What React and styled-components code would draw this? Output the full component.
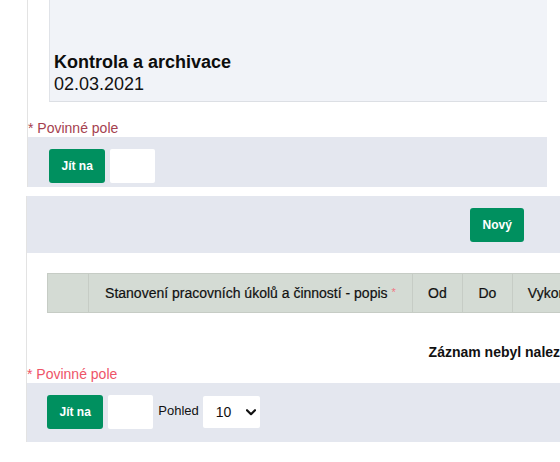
import React from "react";
import styled, { createGlobalStyle } from "styled-components";

const GlobalStyle = createGlobalStyle`
  *, *::before, *::after { box-sizing: border-box; }
  html, body { margin: 0; padding: 0; overflow: hidden; background: #fff; }
  body {
    width: 560px;
    height: 462px;
    font-family: "Liberation Sans", Arial, Helvetica, sans-serif;
    color: #111;
  }
`;

const Page = styled.div`
  display: flex;
  flex-direction: column;
  align-items: flex-start;
`;

const Panel = styled.section`
  margin-left: ${(p) => p.$left}px;
  margin-top: ${(p) => p.$top || 0}px;
  width: ${(p) => p.$width}px;
  flex-shrink: 0;
  border-left: 1px solid #e3e3e3;
  background: #fff;
`;

const InfoCard = styled.div`
  margin-left: 21px;
  padding: 51px 4px 6px;
  background: #f1f3f8;
  border-left: 1px solid #e0e3e8;
  border-bottom: 1px solid #dcdfe4;
`;

const CardTitle = styled.div`
  font-size: 18px;
  line-height: 22px;
  font-weight: 700;
  color: #0d0d0d;
`;

const CardDate = styled.div`
  font-size: 18px;
  line-height: 22px;
  color: #111;
`;

const Required = styled.div`
  margin-top: ${(p) => p.$top || 0}px;
  font-size: 14px;
  line-height: 17px;
  color: ${(p) => p.$color};
`;

const Band = styled.div`
  display: flex;
  align-items: center;
  gap: 5px;
  background: #e4e7ef;
  padding: ${(p) => p.$pad};
`;

const GreenButton = styled.button`
  height: 34px;
  padding: 0 12.5px;
  border: none;
  border-radius: 3px;
  background: #00905f;
  color: #fff;
  font-family: "Liberation Sans", Arial, sans-serif;
  font-size: 12px;
  font-weight: 700;
  cursor: pointer;
  flex-shrink: 0;
`;

const PageInput = styled.input`
  width: 45px;
  height: 34px;
  border: none;
  border-radius: 2px;
  background: #fff;
  padding: 0 4px;
  font-family: "Liberation Sans", Arial, sans-serif;
  font-size: 14px;
  flex-shrink: 0;
`;

const ViewLabel = styled.span`
  font-size: 13px;
  color: #111;
  margin-bottom: 4px;
`;

const SelectWrap = styled.div`
  position: relative;
  width: 57px;
  height: 32px;
  margin-left: -1px;
  flex-shrink: 0;
`;

const ViewSelect = styled.select`
  appearance: none;
  -webkit-appearance: none;
  width: 100%;
  height: 100%;
  border: none;
  border-radius: 2px;
  background: #fff;
  padding: 0 0 0 13px;
  font-family: "Liberation Sans", Arial, sans-serif;
  font-size: 14px;
  color: #111;
`;

const Chevron = styled.svg`
  position: absolute;
  right: 4px;
  top: 13px;
  pointer-events: none;
`;

const Toolbar = styled.div`
  display: flex;
  align-items: center;
  height: 57px;
  padding: 0 0 0 443px;
  background: #e4e7ef;
`;

const TableWrap = styled.div`
  padding: 20px 20px 0;
`;

const Grid = styled.table`
  width: 911px;
  border-collapse: collapse;
`;

const HeadCell = styled.th`
  width: ${(p) => p.$w}px;
  height: 39px;
  padding: 0 15px;
  background: #d4dbd4;
  border: 1px solid #c6ccc5;
  font-size: 14px;
  font-weight: 400;
  color: #111;
  -webkit-text-stroke: 0.2px #111;
  text-align: center;
  white-space: nowrap;
`;

const Star = styled.span`
  color: #f07984;
  -webkit-text-stroke: 0;
  font-size: 11px;
  vertical-align: 2px;
`;

const EmptyCell = styled.td`
  padding: 31px 0 6px;
  font-size: 14px;
  line-height: 16px;
  font-weight: 700;
  text-align: center;
  color: #111;
`;

const columns = [
  { key: "sel", width: 41, label: "" },
  { key: "popis", width: 324, label: "Stanovení pracovních úkolů a činností - popis", required: true },
  { key: "od", width: 50, label: "Od" },
  { key: "do", width: 50, label: "Do" },
  { key: "vyk", width: 106, label: "Vykonavatel" },
  { key: "pozn", width: 200, label: "Poznámka" },
  { key: "akce", width: 140, label: "Akce" },
];

export default function App() {
  return (
    <>
      <GlobalStyle />
      <Page>
        <Panel $left={27} $width={520}>
          <InfoCard>
            <CardTitle>Kontrola a archivace</CardTitle>
            <CardDate>02.03.2021</CardDate>
          </InfoCard>
          <Required $top={18} $color="#a5414f">* Povinné pole</Required>
          <Band $pad="12px 0 4px 21px">
            <GreenButton>Jít na</GreenButton>
            <PageInput type="text" />
          </Band>
        </Panel>

        <Panel $left={26} $top={9} $width={952}>
          <Toolbar>
            <GreenButton>Nový</GreenButton>
          </Toolbar>
          <TableWrap>
            <Grid>
              <thead>
                <tr>
                  {columns.map((c) => (
                    <HeadCell key={c.key} $w={c.width}>
                      {c.label}
                      {c.required && (
                        <>
                          {" "}
                          <Star>*</Star>
                        </>
                      )}
                    </HeadCell>
                  ))}
                </tr>
              </thead>
              <tbody>
                <tr>
                  <EmptyCell colSpan={columns.length}>Záznam nebyl nalezen</EmptyCell>
                </tr>
              </tbody>
            </Grid>
          </TableWrap>
          <Required $color="#ee5468">* Povinné pole</Required>
          <Band $pad="12px 0 13px 20px">
            <GreenButton>Jít na</GreenButton>
            <PageInput type="text" />
            <ViewLabel>Pohled</ViewLabel>
            <SelectWrap>
              <ViewSelect defaultValue="10">
                <option value="10">10</option>
                <option value="20">20</option>
                <option value="50">50</option>
              </ViewSelect>
              <Chevron width="10" height="7" viewBox="0 0 10 7">
                <polyline
                  points="1,1.2 5,5.2 9,1.2"
                  fill="none"
                  stroke="#111"
                  strokeWidth="2.2"
                  strokeLinecap="round"
                  strokeLinejoin="round"
                />
              </Chevron>
            </SelectWrap>
          </Band>
        </Panel>
      </Page>
    </>
  );
}
